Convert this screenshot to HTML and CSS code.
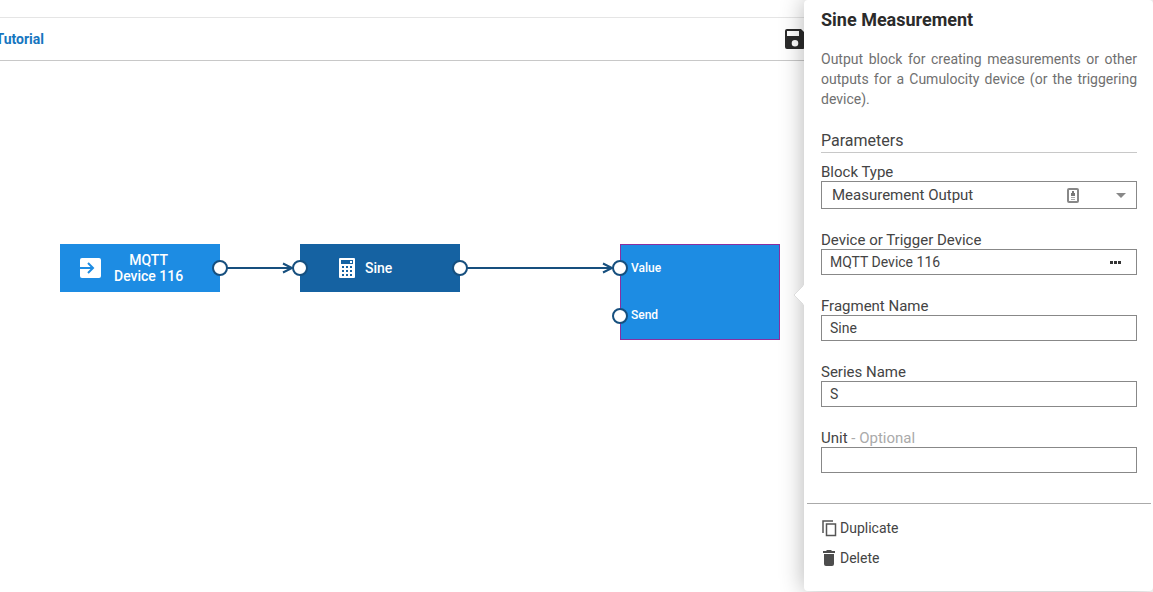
FILE: index.html
```html
<!DOCTYPE html>
<html lang="en">
<head>
<meta charset="utf-8">
<title>Tutorial</title>
<link rel="stylesheet" href="styles.css">
</head>
<body>
<div class="app">
  <main class="editor">
    <div class="topbar"></div>
    <header class="toolbar">
      <div class="crumb"><a class="crumb-link" href="#">Tutorial</a></div>
      <button class="save" type="button" aria-label="Save">
        <svg width="20" height="20" viewBox="0 0 20 20"><path fill="#2b2b2b" fill-rule="evenodd" d="M2 0h14l4 4v14a2 2 0 0 1-2 2H2a2 2 0 0 1-2-2V2a2 2 0 0 1 2-2zM2 2v5h12V2zM10 11a3.300 3.300 0 1 0 0 6.600a3.300 3.300 0 0 0 0-6.600z"/></svg>
      </button>
    </header>
    <section class="canvas">
      <div class="node node-input">
        <svg width="21" height="20" viewBox="0 0 21 20"><rect width="21" height="20" rx="2" fill="#fff"/><path d="M0 10h13M8 5l5 5l-5 5" fill="none" stroke="#1d8ce3" stroke-width="2"/></svg>
        <span class="node-name">MQTT<br>Device 116</span>
      </div>
      <div class="node node-calc">
        <svg width="16" height="20" viewBox="0 0 16 20"><rect width="16" height="20" rx="1" fill="#fff"/><path fill="#1562a2" fill-rule="evenodd" d="M2 2h12v4H2zM11 3v2h2V3zM3 8h2v2H3zM7 8h2v2H7zM11 8h2v2h-2zM3 12h2v2H3zM7 12h2v2H7zM11 12h2v2h-2zM3 16h2v2H3zM7 16h2v2H7zM11 16h2v2h-2z"/></svg>
        <span class="node-name">Sine</span>
      </div>
      <div class="node node-output">
        <span class="port-name">Value</span>
        <span class="port-name">Send</span>
      </div>
      <svg class="wires" width="800" height="320" viewBox="0 0 800 320">
        <g fill="none" stroke="#164f7e" stroke-width="2">
          <path d="M220 207h72M283 202.500l9 4.500l-9 4.500M460 207h152M603 202.500l9 4.500l-9 4.500"/>
          <g fill="#fff">
            <circle cx="220" cy="207" r="7"/>
            <circle cx="300" cy="207" r="7"/>
            <circle cx="460" cy="207" r="7"/>
            <circle cx="620" cy="207" r="7"/>
            <circle cx="620" cy="255" r="7"/>
          </g>
        </g>
      </svg>
    </section>
  </main>

  <aside class="panel">
    <svg class="pointer" width="11" height="20" viewBox="0 0 11 20"><path d="M11 0L1 10l10 10z" fill="#fff"/><path d="M10 1L1 10l9 9" fill="none" stroke="#ddd"/></svg>
    <form class="details">
      <h1 class="title">Sine Measurement</h1>
      <p class="description">Output block for creating measurements or other outputs for a Cumulocity device (or the triggering device).</p>
      <h2 class="section">Parameters</h2>
      <div class="field">
        <label for="type">Block Type</label>
        <div class="control">
          <select id="type" class="box select"><option>Measurement Output</option></select>
          <span class="adorn adorn-select">
            <svg width="12" height="15" viewBox="0 0 12 15"><rect x="1" y="1" width="10" height="13" rx="1" fill="#fff" stroke="#888" stroke-width="2"/><path fill="#777" d="M5 3h2v2H5zM4 5h4v3H4z"/><path fill="#aaa" d="M4 9h4v1H4zM4 11h4v1H4z"/></svg>
            <svg width="10" height="5" viewBox="0 0 10 5"><path d="M0 0h10L5 5z" fill="#888"/></svg>
          </span>
        </div>
      </div>
      <div class="field">
        <label for="device">Device or Trigger Device</label>
        <div class="control">
          <input id="device" class="box" type="text" value="MQTT Device 116">
          <button class="adorn adorn-more" type="button" aria-label="Choose device">
            <svg width="12" height="3" viewBox="0 0 12 3"><path d="M0 0h3v3H0zM4 0h3v3H4zM8 0h3v3H8z" fill="#333"/></svg>
          </button>
        </div>
      </div>
      <div class="field">
        <label for="fragment">Fragment Name</label>
        <input id="fragment" class="box" type="text" value="Sine">
      </div>
      <div class="field">
        <label for="series">Series Name</label>
        <input id="series" class="box" type="text" value="S">
      </div>
      <div class="field">
        <label for="unit">Unit <span class="optional">- Optional</span></label>
        <input id="unit" class="box" type="text">
      </div>
    </form>
    <div class="actions">
      <button class="action" type="button">
        <svg width="15" height="18" viewBox="0 0 15 18"><path d="M1 14V2h10" fill="none" stroke="#555" stroke-width="1.500"/><path d="M4.500 5h9v11.500h-9z" fill="none" stroke="#555" stroke-width="1.500"/></svg>
        Duplicate
      </button>
      <button class="action" type="button">
        <svg width="15" height="18" viewBox="0 0 15 18"><path d="M1 2h3l1-1h4l1 1h3v2H1zM2 5h10v10a2 2 0 0 1-2 2H4a2 2 0 0 1-2-2z" fill="#4d4d4d"/></svg>
        Delete
      </button>
    </div>
  </aside>
</div>
</body>
</html>
```
FILE: styles.css
```css
* {
  box-sizing: border-box;
}

body {
  margin: 0;
  background: #fff;
  color: #444;
  font: 14px/20px Roboto, "Liberation Sans", sans-serif;
}

button {
  padding: 0;
  border: 0;
  background: none;
  color: inherit;
  font: inherit;
}

svg {
  display: block;
  flex: none;
}

.app {
  display: flex;
  align-items: flex-start;
  min-height: 100vh;
  overflow: hidden;
}

.editor {
  display: flex;
  flex: 1;
  flex-direction: column;
  align-self: stretch;
  min-width: 0;
}

.topbar {
  height: 18px;
  border-bottom: 1px solid #e5e5e5;
}

.toolbar {
  display: flex;
  align-items: center;
  justify-content: space-between;
  height: 43px;
  border-bottom: 1px solid #c8c8c8;
}

.crumb {
  display: flex;
  justify-content: flex-end;
  width: 44px;
}

.crumb-link {
  color: #1776bf;
  font-weight: 700;
  text-decoration: none;
}

.save {
  margin-right: -1px;
}

.canvas {
  position: relative;
  flex: 1;
}

.node {
  position: absolute;
  top: 183px;
  display: flex;
  align-items: center;
  width: 160px;
  height: 48px;
  color: #fff;
  font-weight: 500;
  line-height: 16px;
}

.node-input {
  left: 60px;
  gap: 13px;
  padding-left: 20px;
  background: #1d8ce3;
  text-align: center;
}

.node-calc {
  left: 300px;
  gap: 10px;
  padding-left: 39px;
  background: #1562a2;
}

.node-output {
  left: 620px;
  flex-direction: column;
  align-items: flex-start;
  height: 96px;
  padding-left: 10px;
  border: 1px solid #8a2f9f;
  background: #1d8ce3;
  font-size: 12px;
}

.port-name {
  flex: 1;
  line-height: 46px;
}

.wires {
  position: absolute;
  top: 0;
  left: 0;
}

.panel {
  position: relative;
  width: 349px;
  border-radius: 4px;
  background: #fff;
  box-shadow: 0 0 25px rgba(0, 0, 0, 0.3);
}

.pointer {
  position: absolute;
  top: 285px;
  left: -11px;
}

.details {
  padding: 8px 16px 30px 17px;
}

.title {
  margin: 0 0 17px;
  color: #2b2b2b;
  font-size: 18px;
  font-weight: 700;
  line-height: 24px;
}

.description {
  margin: 0 0 20px;
  color: #707070;
  text-align: justify;
}

.section {
  margin: 0 0 10px;
  border-bottom: 1px solid #c8c8c8;
  font-size: 16px;
  font-weight: 400;
  line-height: 23px;
}

.field {
  display: flex;
  flex-direction: column;
  font-size: 15px;
  line-height: 18px;
}

.field + .field {
  margin-top: 22px;
}

.optional {
  color: #aaa;
}

.control {
  position: relative;
  display: flex;
}

.box {
  width: 100%;
  height: 26px;
  padding: 0 8px;
  border: 1px solid #888;
  border-radius: 0;
  background: #fff;
  color: #444;
  font: 14px/24px Roboto, "Liberation Sans", sans-serif;
}

.select {
  height: 28px;
  padding: 0 10px;
  font-size: 15px;
  appearance: none;
}

.adorn {
  position: absolute;
  top: 0;
  bottom: 0;
  display: flex;
  align-items: center;
}

.adorn-select {
  right: 11px;
  gap: 37px;
  pointer-events: none;
}

.adorn-more {
  right: 15px;
}

.actions {
  margin: 0 2px 0 3px;
  padding: 9px 15px 18px;
  border-top: 1px solid #aaa;
}

.action {
  display: flex;
  align-items: center;
  gap: 3px;
  height: 30px;
}
```
